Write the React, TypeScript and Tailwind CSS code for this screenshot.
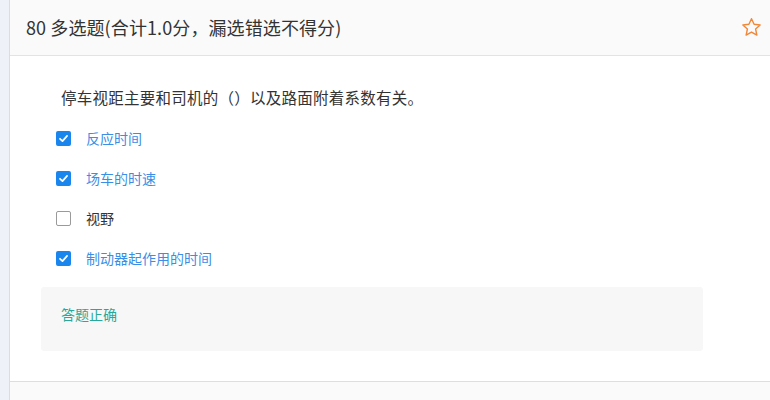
const options = [
  { label: "反应时间", checked: true },
  { label: "场车的时速", checked: true },
  { label: "视野", checked: false },
  { label: "制动器起作用的时间", checked: true },
];

function Check({ checked }: { checked: boolean }) {
  if (!checked) {
    return <span className="w-[15px] h-[15px] rounded-[2px] border border-[#9a9a9a] bg-white flex-shrink-0" />;
  }
  return (
    <span className="w-[15px] h-[15px] rounded-[2px] bg-[#1a85ec] flex items-center justify-center flex-shrink-0">
      <svg width="11" height="11" viewBox="0 0 12 12" fill="none">
        <path d="M2.2 6.3 L4.9 8.9 L9.9 3.2" stroke="white" strokeWidth="1.9" strokeLinecap="round" strokeLinejoin="round" />
      </svg>
    </span>
  );
}

export default function App() {
  return (
    <div
      className="w-[770px] h-[400px] flex overflow-hidden bg-white"
      style={{ fontFamily: '"Microsoft YaHei", "Noto Sans CJK SC", sans-serif' }}
    >
      {/* left rail */}
      <div className="w-[10px] bg-[#eef2f8] border-r border-[#d9dce2] flex-shrink-0" />

      <div className="flex-1 flex flex-col">
        <div className="h-[56px] bg-[#fafafa] border-b border-[#e3e3e3] flex items-center justify-between pl-[16px] pr-[7px]">
          <h2 className="text-[18px] text-[#333] tracking-[0.1px]">80 多选题(合计1.0分，漏选错选不得分)</h2>
          <svg width="23" height="23" viewBox="0 0 24 24" fill="none">
            <path
              d="M12 2.8 L14.7 8.6 L21 9.3 L16.3 13.6 L17.6 19.9 L12 16.7 L6.4 19.9 L7.7 13.6 L3 9.3 L9.3 8.6 Z"
              stroke="#f0883a"
              strokeWidth="1.5"
              strokeLinejoin="round"
            />
          </svg>
        </div>

        <div className="h-[326px] border-b border-[#dedede] pl-[31px] pt-[30px]">
          <p className="text-[15.5px] text-[#333] pl-[20px] leading-[22px] tracking-[0.25px]">停车视距主要和司机的（）以及路面附着系数有关。</p>

          <div className="flex flex-col gap-[21px] mt-[21px] pl-[15px]">
            {options.map((o) => (
              <div key={o.label} className="flex items-center gap-[15px] h-[19px]">
                <Check checked={o.checked} />
                <span className={`text-[14px] ${o.checked ? "text-[#3a8ee6]" : "text-[#333]"}`}>{o.label}</span>
              </div>
            ))}
          </div>

          <div className="mt-[19px] w-[662px] h-[64px] bg-[#f7f7f7] rounded-[3px] pl-[20px] pt-[14px]">
            <span className="text-[14px] text-[#26a99a]">答题正确</span>
          </div>
        </div>

        <div className="flex-1 bg-[#fafafa]" />
      </div>
    </div>
  );
}
